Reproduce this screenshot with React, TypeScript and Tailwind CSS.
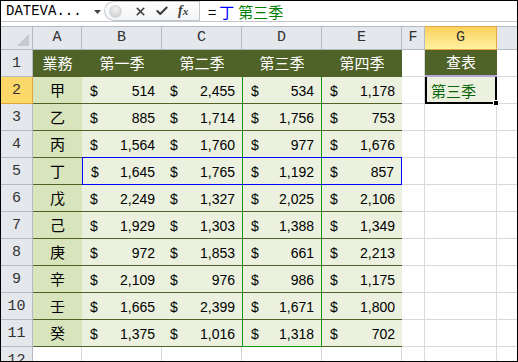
import React from "react";
import { X, Check } from "lucide-react";

const rows: [string, number, number, number, number][] = [
  ["甲", 514, 2455, 534, 1178],
  ["乙", 885, 1714, 1756, 753],
  ["丙", 1564, 1760, 977, 1676],
  ["丁", 1645, 1765, 1192, 857],
  ["戊", 2249, 1327, 2025, 2106],
  ["己", 1929, 1303, 1388, 1349],
  ["庚", 972, 1853, 661, 2213],
  ["辛", 2109, 976, 986, 1175],
  ["壬", 1665, 2399, 1671, 1800],
  ["癸", 1375, 1016, 1318, 702],
];

const cols = ["A", "B", "C", "D", "E", "F", "G"];
const quarters = ["第一季", "第二季", "第三季", "第四季"];

const CJK = { fontFamily: '"Noto Sans CJK TC", "Noto Sans", sans-serif' };
const MONO = { fontFamily: '"Liberation Mono", "DejaVu Sans Mono", monospace' };
const NUM = { fontFamily: '"Liberation Sans", Arial, sans-serif' };

function RowHead({ n, active }: { n: number; active?: boolean }) {
  return (
    <div
      style={MONO}
      className={`flex items-center justify-center pt-[3px] text-[15px] text-[#333] border-r border-b ${
        active ? "bg-[#fcd868] border-[#e5a33c]" : "bg-[#e4e7ec] border-[#b3bac4]"
      }`}
    >
      {n}
    </div>
  );
}

function FormulaBar() {
  return (
    <div className="flex h-[21px] items-stretch border-b border-[#c3c7cc] bg-white">
      {/* name box */}
      <div className="relative flex w-[103px] items-center pl-[5px]">
        <span style={MONO} className="text-[14px] leading-none text-black">
          DATEVA...
        </span>
        <svg className="absolute left-[93px] top-[9px]" width="7" height="4" viewBox="0 0 7 4">
          <polygon points="0,0 7,0 3.5,4" fill="#444" />
        </svg>
      </div>
      {/* buttons */}
      <div className="flex w-[95px] items-center rounded-l-[11px] border-l border-y border-[#c3c7cc] bg-gradient-to-b from-white to-[#f3f4f6]">
        <div className="ml-[4px] h-[13px] w-[13px] rounded-full bg-[radial-gradient(circle_at_50%_35%,#f4f4f4,#c4c6c9)] border border-[#d2d4d7]" />
        <X className="ml-[12px] h-[13px] w-[13px] text-[#3c3c3c]" strokeWidth={3} />
        <Check className="ml-[8px] h-[14px] w-[14px] text-[#3c3c3c]" strokeWidth={3.5} />
        <span
          style={{ fontFamily: '"Liberation Serif", serif' }}
          className="ml-[9px] text-[14px] italic font-bold leading-none text-[#3c3c3c]"
        >
          f<span className="text-[11px]">x</span>
        </span>
      </div>
      <div className="w-px bg-[#c3c7cc]" />
      <div style={CJK} className="flex items-center pl-[8px] text-[15px] leading-none">
        <span className="text-black">=</span>
        <span className="ml-[3px] text-[#0000ff]">丁</span>
        <span className="ml-[4px] text-[#008000]">第三季</span>
      </div>
    </div>
  );
}

export default function App() {
  return (
    <div className="h-[362px] w-[518px] overflow-hidden border border-black bg-white">
      <FormulaBar />
      <div className="h-[4px] bg-white" />
      <div className="grid grid-cols-[32px_49px_80px_80px_80px_80px_23px_72px_1fr] grid-rows-[24px_27px_repeat(11,27px)]">
        {/* column headers */}
        <div className="relative border-t border-r border-b border-[#b3bac4] bg-[#e4e7ec]">
          <svg className="absolute right-[3px] bottom-[3px]" width="12" height="12" viewBox="0 0 12 12">
            <polygon points="12,0 12,12 0,12" fill="#c5cad1" />
          </svg>
        </div>
        {cols.map((c) => (
          <div
            key={c}
            style={MONO}
            className={`flex items-center justify-center text-[15px] text-[#333] border-t border-r border-b ${
              c === "G"
                ? "bg-gradient-to-b from-[#fbd15c] to-[#fff19f] border-[#e3a843]"
                : "bg-[#e4e7ec] border-[#b3bac4]"
            }`}
          >
            {c}
          </div>
        ))}
        <div className="border-t border-b border-[#b3bac4] bg-[#e4e7ec]" />

        {/* row 1 */}
        <RowHead n={1} />
        <div style={CJK} className="flex items-center justify-center bg-[#4f6228] text-[15px] text-white">
          業務
        </div>
        {quarters.map((q) => (
          <div key={q} style={CJK} className="flex items-center justify-center bg-[#4f6228] text-[15px] text-white">
            {q}
          </div>
        ))}
        <div className="border-r border-b border-[#d9d9d9]" />
        <div
          style={CJK}
          className="flex items-center justify-center border-b-2 border-[#b4a7d6] bg-[#4f6228] text-[15px] text-white"
        >
          查表
        </div>
        <div className="border-b border-[#d9d9d9]" />

        {/* data rows */}
        {rows.map((r, i) => {
          const n = i + 2;
          const blueBottom = i === 2 || i === 3;
          const last = i === rows.length - 1;
          return (
            <React.Fragment key={r[0]}>
              <RowHead n={n} active={n === 2} />
              <div
                style={CJK}
                className="flex items-center justify-center border-b border-[#4f6228] bg-[#d8e4bc] text-[15px] text-black"
              >
                {r[0]}
              </div>
              {[1, 2, 3, 4].map((k) => {
                const isD = k === 3;
                let cls = "border-b ";
                if (blueBottom) cls += "border-b-[#0000ff] ";
                else if (isD && last) cls += "border-b-[#169a16] ";
                else cls += "border-b-[#4f6228] ";
                if (isD) cls += "border-x border-x-[#169a16] ";
                if (i === 3 && k === 1) cls += "border-l border-l-[#0000ff] ";
                if (i === 3 && k === 4) cls += "border-r border-r-[#0000ff] ";
                return (
                  <div
                    key={k}
                    style={NUM}
                    className={`flex items-center justify-between bg-[#ebf1de] pl-[8px] pr-[7px] pt-[2px] text-[14px] text-black ${cls}`}
                  >
                    <span>$</span>
                    <span>{(r[k] as number).toLocaleString("en-US")}</span>
                  </div>
                );
              })}
              <div className="border-r border-b border-[#d9d9d9]" />
              {n === 2 ? (
                <div
                  style={CJK}
                  className="relative flex items-center border-x-2 border-b-2 border-black bg-[#ebf1de] pl-[4px] pt-[3px] text-[15px] text-[#0b650b]"
                >
                  第三季
                  <div className="absolute -right-[4px] -bottom-[4px] h-[6px] w-[6px] border border-white bg-black" />
                </div>
              ) : (
                <div className="border-r border-b border-[#d9d9d9]" />
              )}
              <div className="border-b border-[#d9d9d9]" />
            </React.Fragment>
          );
        })}

        {/* row 12 */}
        <RowHead n={12} />
        {cols.map((c) => (
          <div key={c} className="border-r border-b border-[#d9d9d9]" />
        ))}
        <div className="border-b border-[#d9d9d9]" />
      </div>
    </div>
  );
}
